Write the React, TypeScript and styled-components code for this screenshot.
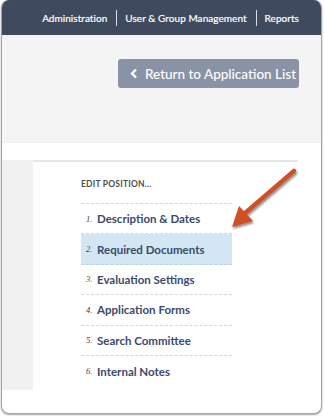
import styled, { createGlobalStyle } from 'styled-components'

const GlobalStyle = createGlobalStyle`
  html, body {
    margin: 0;
    padding: 0;
    background: #ffffff;
  }
  body {
    font-family: Lato, "Open Sans", "Liberation Sans", sans-serif;
  }
`

const Frame = styled.div`
  padding: 0 2px 0 1px;
  width: 324px;
  height: 416px;
  box-sizing: border-box;
`

const Card = styled.div`
  position: relative;
  height: 413px;
  border: 1px solid #a3a3a3;
  border-top: none;
  border-radius: 8px;
  overflow: hidden;
  background: #ffffff;
  box-shadow: 0 1px 2px rgba(0, 0, 0, 0.35);
  display: flex;
  flex-direction: column;
`

const TopBar = styled.div`
  height: 35px;
  background: #404a5e;
  display: flex;
  align-items: center;
  justify-content: flex-end;
  padding-right: 22px;
  flex-shrink: 0;
`

const NavLink = styled.span`
  color: #ffffff;
  font-size: 10px;
  font-weight: 400;
  letter-spacing: 0.05px;
  -webkit-text-stroke: 0.2px #ffffff;
`

const NavSep = styled.span`
  width: 1px;
  height: 16px;
  background: #d8dce4;
  margin: 0 8px 0 9px;
`

const Toolbar = styled.div`
  height: 108px;
  background: #f4f4f4;
  display: flex;
  justify-content: flex-end;
  align-items: flex-start;
  padding: 24px 22px 0 0;
  box-sizing: border-box;
  flex-shrink: 0;
`

const BackButton = styled.button`
  display: flex;
  align-items: center;
  gap: 7px;
  height: 29px;
  width: 181px;
  padding: 0 0 0 12px;
  border: none;
  border-radius: 3px;
  background: #8a93a5;
  color: #ffffff;
  font-family: inherit;
  font-size: 13.5px;
  font-weight: 500;
  box-sizing: border-box;
`

const Spacer = styled.div`
  height: 17px;
  flex-shrink: 0;
`

const ContentRow = styled.div`
  display: flex;
  height: 230px;
`

const SideRail = styled.div`
  width: 31px;
  background: #f1f1f1;
`

const Panel = styled.div`
  width: 265px;
  border-top: 2px solid #e6e6e6;
  padding: 17px 0 0 48px;
  box-sizing: border-box;
`

const PanelTitle = styled.div`
  font-size: 8.5px;
  font-weight: 700;
  color: #4f4f4f;
  letter-spacing: 0.2px;
  margin-bottom: 14px;
`

const StepList = styled.ol`
  list-style: none;
  margin: 0;
  padding: 0;
  width: 151px;
  border-top: 1px dashed #d6d6d6;
`

const Step = styled.li<{ $active?: boolean }>`
  display: flex;
  align-items: center;
  height: 30.4px;
  border-bottom: 1px dashed ${(p) => (p.$active ? '#bcd3e0' : '#d6d6d6')};
  background: ${(p) => (p.$active ? '#d2e7f3' : 'transparent')};
  padding-left: 5px;
  box-sizing: border-box;
  &:last-child {
    border-bottom: none;
  }
`

const StepNum = styled.span`
  font-family: "Liberation Serif", serif;
  font-style: italic;
  font-size: 8.5px;
  color: #444444;
  width: 11px;
`

const StepName = styled.span`
  font-size: 11.5px;
  font-weight: 700;
  color: #3c4a6c;
`

const Pointer = styled.svg`
  position: absolute;
  left: 218px;
  top: 160px;
`

const steps = [
  'Description & Dates',
  'Required Documents',
  'Evaluation Settings',
  'Application Forms',
  'Search Committee',
  'Internal Notes',
]

export default function App() {
  return (
    <Frame>
      <GlobalStyle />
      <Card>
        <TopBar>
          <NavLink>Administration</NavLink>
          <NavSep />
          <NavLink>User &amp; Group Management</NavLink>
          <NavSep />
          <NavLink>Reports</NavLink>
        </TopBar>
        <Toolbar>
          <BackButton>
            <svg width="8" height="11" viewBox="0 0 8 11">
              <path d="M6 1.5 L2 5.5 L6 9.5" fill="none" stroke="#fff" strokeWidth="2.4" />
            </svg>
            Return to Application List
          </BackButton>
        </Toolbar>
        <Spacer />
        <ContentRow>
          <SideRail />
          <Panel>
            <PanelTitle>EDIT POSITION...</PanelTitle>
            <StepList>
              {steps.map((s, i) => (
                <Step key={s} $active={i === 1}>
                  <StepNum>{i + 1}.</StepNum>
                  <StepName>{s}</StepName>
                </Step>
              ))}
            </StepList>
          </Panel>
        </ContentRow>
        <Pointer width="84" height="76" viewBox="0 0 84 76">
          <defs>
            <filter id="sh" x="-30%" y="-30%" width="160%" height="160%">
              <feDropShadow dx="1" dy="2" stdDeviation="1.2" floodColor="#000" floodOpacity="0.45" />
            </filter>
          </defs>
          <g filter="url(#sh)">
            <path d="M74 11 L24 54" stroke="#cf4f28" strokeWidth="4.5" strokeLinecap="round" />
            <path d="M12 67 L19 46 L33 61 Z" fill="#cf4f28" />
          </g>
        </Pointer>
      </Card>
    </Frame>
  )
}
